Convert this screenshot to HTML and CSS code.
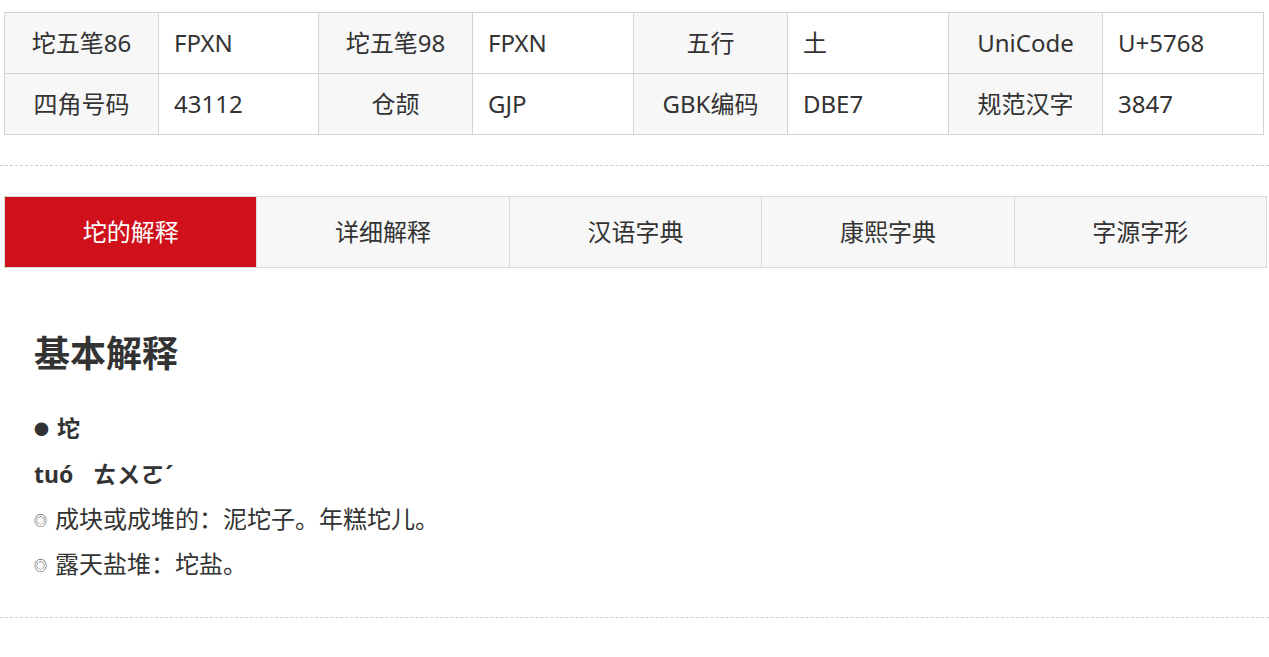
FILE: index.html
```html
<!DOCTYPE html>
<html lang="zh">
<head>
<meta charset="utf-8">
<title>坨</title>
<link rel="stylesheet" href="styles.css">
</head>
<body>
<div class="page">
  <table class="info">
    <colgroup>
      <col class="c-l"><col class="c-v1"><col class="c-l"><col class="c-v">
      <col class="c-l"><col class="c-v"><col class="c-l"><col class="c-v">
    </colgroup>
    <tr>
      <td class="lb">坨五笔86</td><td class="val">FPXN</td>
      <td class="lb">坨五笔98</td><td class="val">FPXN</td>
      <td class="lb">五行</td><td class="val">土</td>
      <td class="lb">UniCode</td><td class="val">U+5768</td>
    </tr>
    <tr>
      <td class="lb">四角号码</td><td class="val">43112</td>
      <td class="lb">仓颉</td><td class="val">GJP</td>
      <td class="lb">GBK编码</td><td class="val">DBE7</td>
      <td class="lb">规范汉字</td><td class="val">3847</td>
    </tr>
  </table>
  <div class="sep"></div>
  <div class="tabs">
    <div class="tab active">坨的解释</div>
    <div class="tab">详细解释</div>
    <div class="tab">汉语字典</div>
    <div class="tab">康熙字典</div>
    <div class="tab">字源字形</div>
  </div>
  <div class="content">
    <h2 class="title">基本解释</h2>
    <p class="word"><span class="dot">●</span>坨</p>
    <p class="py">tuó<span class="zy">ㄊㄨㄛˊ</span></p>
    <p class="def"><span class="mk">◎</span>成块或成堆的：泥坨子。年糕坨儿。</p>
    <p class="def"><span class="mk">◎</span>露天盐堆：坨盐。</p>
  </div>
  <div class="sep sep-end"></div>
</div>
</body>
</html>
```
FILE: styles.css
```css
html, body {
  margin: 0;
  padding: 0;
  background: #fff;
}
body {
  font-family: "Noto Sans", "Noto Sans CJK SC", sans-serif;
  color: #333;
}
.page {
  padding-top: 12px;
}
.info {
  margin-left: 4px;
  width: 1259px;
  border-collapse: collapse;
  table-layout: fixed;
  font-size: 24px;
}
.c-l { width: 154px; }
.c-v1 { width: 160px; }
.c-v { width: 161px; }
.info td {
  border: 1px solid #d4d4d4;
  height: 60px;
  padding: 0;
  line-height: 30px;
}
.info .lb {
  background: #f7f7f7;
  text-align: center;
}
.info .val {
  background: #fff;
  padding-left: 15px;
}
.sep {
  border-top: 1px dashed #cfcfcf;
  margin-top: 30px;
}
.tabs {
  display: flex;
  margin: 30px 2px 0 4px;
  border: 1px solid #d9d9d9;
  background: #f7f7f7;
}
.tab {
  flex: 1;
  height: 70px;
  line-height: 70px;
  text-align: center;
  font-size: 24px;
  border-left: 1px solid #d9d9d9;
}
.tab:first-child { border-left: none; }
.tab.active {
  background: #d0111b;
  color: #fff;
}
.content {
  padding-left: 34px;
  padding-top: 61px;
}
.title {
  margin: 0;
  font-size: 36px;
  line-height: 50px;
  font-weight: bold;
}
.word, .py, .def {
  margin: 0;
  line-height: 45px;
}
.word {
  margin-top: 27px;
  font-size: 23px;
  font-weight: bold;
}
.dot {
  display: inline-block;
  font-size: 15px;
  width: 23px;
  vertical-align: 2px;
}
.py {
  font-size: 23px;
  font-weight: bold;
}
.zy {
  margin-left: 20px;
  letter-spacing: 1px;
}
.def {
  font-size: 24px;
  line-height: 44px;
}
.mk {
  font-size: 13px;
  display: inline-block;
  width: 21px;
  vertical-align: 3px;
}
.sep-end {
  margin-top: 30px;
}
```
